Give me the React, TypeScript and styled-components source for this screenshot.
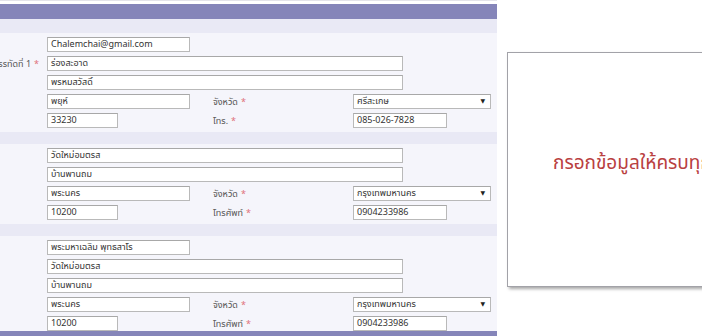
import React from 'react'
import styled, { createGlobalStyle } from 'styled-components'

const GlobalStyle = createGlobalStyle`
  html, body {
    margin: 0;
    padding: 0;
    background: #ffffff;
    overflow: hidden;
  }
  body {
    font-family: Tahoma, 'Noto Sans Thai', 'Noto Sans', 'DejaVu Sans', sans-serif;
  }
`

const Page = styled.div`
  position: relative;
  width: 702px;
  height: 336px;
  overflow: hidden;
  background: #ffffff;
`

const Form = styled.div`
  width: 497px;
  padding-top: 3px;
  background: #ffffff;
  border-top: 1px solid #e4e4ea;
  box-sizing: border-box;
  display: flex;
  flex-direction: column;
`

const HeadBar = styled.div`
  height: 15px;
  background: #8585b9;
`

const FootBar = styled.div`
  height: 6px;
  background: #8585b9;
`

const Band = styled.div<{ $h: number }>`
  height: ${(p) => p.$h}px;
  background: #e9e9f5;
`

const Section = styled.div<{ $last?: boolean }>`
  background: #f5f5fb;
  padding: 4px 0 ${(p) => (p.$last ? 0 : 4)}px;
  display: flex;
  flex-direction: column;
  gap: 4px;
`

const Row = styled.div`
  display: grid;
  grid-template-columns: 47px 166px 140px 1fr;
  height: 15px;
  align-items: center;
`

const Label = styled.div`
  grid-column: 1;
  display: flex;
  justify-content: flex-end;
  padding-right: 8px;
  white-space: nowrap;
  font-size: 9px;
  color: #555;
`

const SideLabel = styled.div`
  grid-column: 3;
  font-size: 9px;
  color: #555;
  white-space: nowrap;
`

const Star = styled.span`
  color: #e0707a;
  margin-left: 3px;
`

const Field = styled.div<{ $w: number; $col: number; $span?: number }>`
  grid-column: ${(p) => p.$col} / span ${(p) => p.$span ?? 1};
  width: ${(p) => p.$w}px;
  height: 15px;
  box-sizing: border-box;
  border: 1px solid #b9b9b9;
  border-top-color: #a8a8a8;
  background: #ffffff;
  padding: 0 3px;
  font-size: 9px;
  line-height: 13px;
  color: #333;
  white-space: nowrap;
  overflow: hidden;
`

const Select = styled(Field)`
  display: flex;
  justify-content: space-between;
  align-items: center;
  padding-right: 5px;
`

const Arrow = styled.span`
  font-size: 6px;
  color: #222;
`

const Dialog = styled.div`
  position: absolute;
  left: 507px;
  top: 52px;
  width: 320px;
  height: 235px;
  box-sizing: border-box;
  border: 1px solid #a2a2a8;
  background: #ffffff;
  box-shadow: 2px 2px 3px rgba(0, 0, 0, 0.35);
  display: flex;
  align-items: center;
  padding: 0 0 12px 45px;
`

const Message = styled.div`
  font-size: 19px;
  color: #b9403f;
  white-space: nowrap;
`

type Addr = {
  line1: string
  line2: string
  district: string
  province: string
  zip: string
  phoneLabel: string
  phone: string
}

const AddressRows = ({ a, labelFirst }: { a: Addr; labelFirst?: boolean }) => (
  <>
    <Row>
      {labelFirst && (
        <Label>
          บรรทัดที่ 1<Star>*</Star>
        </Label>
      )}
      <Field $col={2} $span={3} $w={356}>
        {a.line1}
      </Field>
    </Row>
    <Row>
      <Field $col={2} $span={3} $w={356}>
        {a.line2}
      </Field>
    </Row>
    <Row>
      <Field $col={2} $w={143}>
        {a.district}
      </Field>
      <SideLabel>
        จังหวัด<Star>*</Star>
      </SideLabel>
      <Select $col={4} $w={138}>
        <span>{a.province}</span>
        <Arrow>▼</Arrow>
      </Select>
    </Row>
    <Row>
      <Field $col={2} $w={71}>
        {a.zip}
      </Field>
      <SideLabel>
        {a.phoneLabel}
        <Star>*</Star>
      </SideLabel>
      <Field $col={4} $w={94}>
        {a.phone}
      </Field>
    </Row>
  </>
)

const home: Addr = {
  line1: 'ร่องสะอาด',
  line2: 'พรหมสวัสดิ์',
  district: 'พยุห์',
  province: 'ศรีสะเกษ',
  zip: '33230',
  phoneLabel: 'โทร.',
  phone: '085-026-7828',
}

const temple: Addr = {
  line1: 'วัดใหม่อมตรส',
  line2: 'บ้านพานถม',
  district: 'พระนคร',
  province: 'กรุงเทพมหานคร',
  zip: '10200',
  phoneLabel: 'โทรศัพท์',
  phone: '0904233986',
}

export default function App() {
  return (
    <Page>
      <GlobalStyle />
      <Form>
        <HeadBar />
        <Band $h={14} />
        <Section>
          <Row>
            <Field $col={2} $w={143}>
              Chalemchai@gmail.com
            </Field>
          </Row>
          <AddressRows a={home} labelFirst />
        </Section>
        <Band $h={12} />
        <Section>
          <AddressRows a={temple} />
        </Section>
        <Band $h={12} />
        <Section $last>
          <Row>
            <Field $col={2} $w={143}>
              พระมหาเฉลิม พุทธสาโร
            </Field>
          </Row>
          <AddressRows a={temple} />
        </Section>
        <FootBar />
      </Form>
      <Dialog>
        <Message>กรอกข้อมูลให้ครบทุกช่อง</Message>
      </Dialog>
    </Page>
  )
}
